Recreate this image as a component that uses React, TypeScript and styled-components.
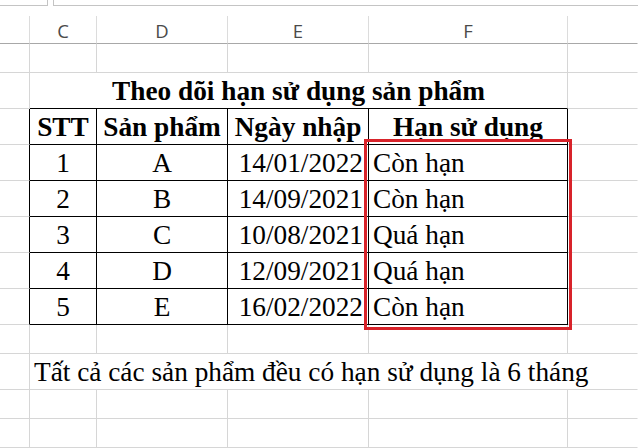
import React from "react";
import styled, { createGlobalStyle, css } from "styled-components";

const GlobalStyle = createGlobalStyle`
  html, body {
    margin: 0;
    padding: 0;
    background: #ffffff;
    overflow: hidden;
  }
  * { box-sizing: border-box; }
`;

const GRID = "#d6d6d6";
const BLACK = "#000000";
const COLS = "30px 67px 131px 141px 199px 1fr";

type Line = "grid" | "black" | "none" | "header";

const lineColor = (l: Line) =>
  l === "black" ? BLACK : l === "header" ? "#a8a8a8" : l === "grid" ? GRID : "transparent";

const Page = styled.div`
  width: 638px;
  height: 448px;
  overflow: hidden;
  background: #fff;
`;

const TopStrip = styled.div`
  display: flex;
  height: 6px;
  gap: 5px;
`;

const NameBox = styled.div`
  width: 48px;
  border-right: 1px solid #c4c4c4;
  border-bottom: 1px solid #c4c4c4;
`;

const FormulaBar = styled.div`
  flex: 1;
  border-left: 1px solid #c4c4c4;
  border-bottom: 1px solid #c4c4c4;
`;

const Sheet = styled.div`
  position: relative;
  margin-top: 10px;
`;

const Row = styled.div<{ $h: number }>`
  display: grid;
  grid-template-columns: ${COLS};
  height: ${(p) => p.$h}px;
`;

const ColHead = styled.div<{ $right?: boolean }>`
  display: flex;
  align-items: center;
  justify-content: center;
  border-bottom: 1px solid #a8a8a8;
  border-right: 1px solid ${(p) => (p.$right === false ? "transparent" : "#dcdcdc")};
  font-family: "Open Sans", "Noto Sans", sans-serif;
  font-size: 18.5px;
  color: #4a4a4a;
  padding-top: 1px;
`;

const Cell = styled.div<{
  $span?: number;
  $right?: Line;
  $bottom?: Line;
  $align?: "left" | "center" | "right";
  $bold?: boolean;
}>`
  display: flex;
  align-items: flex-end;
  min-width: 0;
  white-space: nowrap;
  ${(p) => p.$span && css`grid-column: span ${p.$span};`}
  border-right: 1px solid ${(p) => lineColor(p.$right ?? "grid")};
  border-bottom: 1px solid ${(p) => lineColor(p.$bottom ?? "grid")};
  justify-content: ${(p) =>
    p.$align === "center" ? "center" : p.$align === "right" ? "flex-end" : "flex-start"};
  padding: 0 ${(p) => (p.$align === "right" ? "5px" : "0")} 2px
    ${(p) => (p.$align === "left" ? "4px" : "0")};
  font-family: "Liberation Serif", "Times New Roman", serif;
  font-size: 27.3px;
  line-height: 30px;
  font-weight: ${(p) => (p.$bold ? 700 : 400)};
  color: #000;
`;

const Highlight = styled.div`
  position: absolute;
  left: 364px;
  top: 123px;
  width: 208px;
  height: 191px;
  border: 3px solid #d8232a;
  pointer-events: none;
`;

const data = [
  { stt: "1", sp: "A", date: "14/01/2022", status: "Còn hạn" },
  { stt: "2", sp: "B", date: "14/09/2021", status: "Còn hạn" },
  { stt: "3", sp: "C", date: "10/08/2021", status: "Quá hạn" },
  { stt: "4", sp: "D", date: "12/09/2021", status: "Quá hạn" },
  { stt: "5", sp: "E", date: "16/02/2022", status: "Còn hạn" },
];

const EmptyRow: React.FC<{ h: number }> = ({ h }) => (
  <Row $h={h}>
    <Cell />
    <Cell />
    <Cell />
    <Cell />
    <Cell />
    <Cell $right="none" />
  </Row>
);

export default function App() {
  return (
    <Page>
      <GlobalStyle />
      <TopStrip>
        <NameBox />
        <FormulaBar />
      </TopStrip>
      <Sheet>
        <Row $h={28}>
          <ColHead />
          <ColHead>C</ColHead>
          <ColHead>D</ColHead>
          <ColHead>E</ColHead>
          <ColHead>F</ColHead>
          <ColHead $right={false} />
        </Row>
        <EmptyRow h={29} />
        <Row $h={36}>
          <Cell />
          <Cell $span={4} $align="center" $bold $bottom="black">
            Theo dõi hạn sử dụng sản phẩm
          </Cell>
          <Cell $right="none" />
        </Row>
        <Row $h={36}>
          <Cell $right="black" />
          <Cell $align="center" $bold $right="black" $bottom="black">STT</Cell>
          <Cell $align="center" $bold $right="black" $bottom="black">Sản phẩm</Cell>
          <Cell $align="center" $bold $right="black" $bottom="black">Ngày nhập</Cell>
          <Cell $align="center" $bold $right="black" $bottom="black">Hạn sử dụng</Cell>
          <Cell $right="none" />
        </Row>
        {data.map((r) => (
          <Row $h={36} key={r.stt}>
            <Cell $right="black" />
            <Cell $align="center" $right="black" $bottom="black">{r.stt}</Cell>
            <Cell $align="center" $right="black" $bottom="black">{r.sp}</Cell>
            <Cell $align="right" $right="black" $bottom="black">{r.date}</Cell>
            <Cell $align="left" $right="black" $bottom="black">{r.status}</Cell>
            <Cell $right="none" />
          </Row>
        ))}
        <EmptyRow h={29} />
        <Row $h={36}>
          <Cell />
          <Cell $span={5} $align="left" $right="none">
            Tất cả các sản phẩm đều có hạn sử dụng là 6 tháng
          </Cell>
        </Row>
        <EmptyRow h={29} />
        <EmptyRow h={29} />
        <EmptyRow h={29} />
        <Highlight />
      </Sheet>
    </Page>
  );
}
